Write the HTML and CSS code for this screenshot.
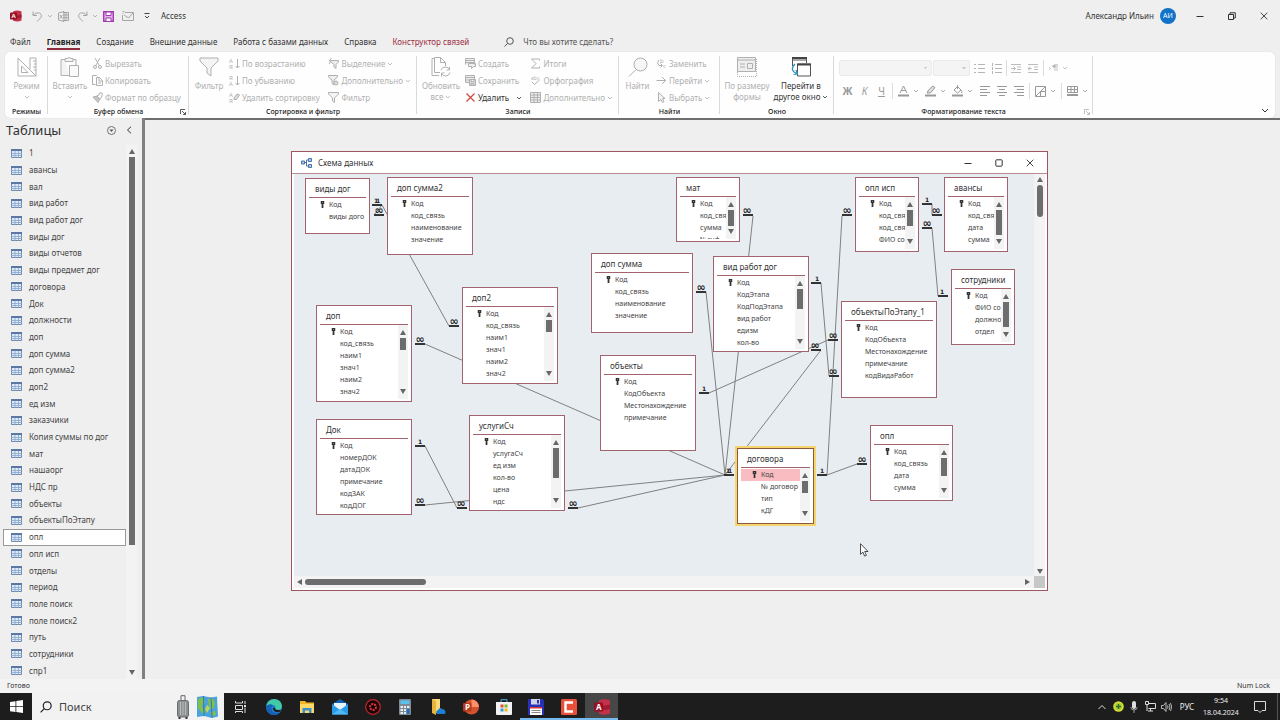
FILE: index.html
```html
<!DOCTYPE html>
<html lang="ru">
<head>
    <meta charset="UTF-8">
    <meta name="viewport" content="width=device-width, initial-scale=1.0">
    <title>Access - Схема данных</title>
    <link rel="stylesheet" href="styles.css">
</head>
<body>
    <svg class="sprite" aria-hidden="true">
        <symbol id="chev" viewBox="0 0 6 4"><path d="M1 1l2 2 2-2" fill="none" stroke="currentColor" stroke-width=".8"/></symbol>
        <symbol id="up" viewBox="0 0 6 5"><path d="M3 0l3 5H0z" fill="currentColor"/></symbol>
        <symbol id="down" viewBox="0 0 6 5"><path d="M0 0h6L3 5z" fill="currentColor"/></symbol>
        <symbol id="left" viewBox="0 0 5 6"><path d="M5 0v6L0 3z" fill="currentColor"/></symbol>
        <symbol id="right" viewBox="0 0 5 6"><path d="M0 0l5 3-5 3z" fill="currentColor"/></symbol>
        <symbol id="key" viewBox="0 0 5 8"><path d="M0.500 0h4v3.500h-1V8h-2V3.500h-1z" fill="#333"/><path d="M2 1h1v1H2zM3 5h1v1H3z" fill="#999"/></symbol>
        <symbol id="table" viewBox="0 0 11 9"><path d="M.5.5h10v8H.5z" fill="#dce9f7" stroke="#7088ac"/><path d="M0 0h11v2H0z" fill="#5b78a5"/><path d="M0 4.500h11M0 6.500h11M4 2v7M7.500 2v7" stroke="#88a4cc" stroke-width=".8"/></symbol>
        <symbol id="glass" viewBox="0 0 10 10"><circle cx="6" cy="4" r="3.300" fill="none" stroke="currentColor"/><path d="M3.600 6.400L.5 9.500" stroke="currentColor"/></symbol>
        <symbol id="launch" viewBox="0 0 6 6"><path d="M.5 5V.5H5M2 2l3.500 3.500M5.500 3v2.500H3" fill="none" stroke="currentColor" stroke-width=".8"/></symbol>
        <symbol id="funnel" viewBox="0 0 20 20"><path d="M1 1h18v3l-7 7v8l-4-3v-5L1 4z" fill="#f4f4f4" stroke="currentColor"/></symbol>
        <symbol id="min" viewBox="0 0 8 8"><path d="M0.500 4.500h7" stroke="currentColor"/></symbol>
        <symbol id="close" viewBox="0 0 8 8"><path d="M.7.7l6.600 6.600M7.300.7L.7 7.300" stroke="currentColor" stroke-width=".9"/></symbol>
    </svg>

    <header class="titlebar">
        <div class="quick-access">
            <svg class="app-logo" viewBox="0 0 12 12"><path d="M3 1.500Q7-.5 11.500 1.500v9Q7 12.500 3 10.500z" fill="#c4314b"/><path d="M3 5q4 1 8.500-.5v3Q7 9 3 8z" fill="#a01c34"/><rect y="2.500" width="7" height="7" rx="1" fill="#970f25"/><text x="1.500" y="8.300" font-size="6" font-weight="700" fill="#fff">A</text></svg>
            <button class="qa-btn undo" aria-label="Отменить"><svg width="11" height="11" viewBox="0 0 11 11"><path d="M1 .5v4h4M1 4.500Q4 .8 7.500 2q4 2.500 0 6L5 10.500" fill="none" stroke="currentColor"/></svg><svg width="6" height="4"><use href="#chev"/></svg></button>
            <button class="qa-btn" aria-label="Экспорт в Excel"><svg width="11" height="11" viewBox="0 0 11 11"><path d="M5 1.500h5.500v8H5M5 4h5.500M5 6.700h5.500M8 1.500v8M.5 2L6 .5v10L.5 9zM2 4l2.500 3.500M4.500 4L2 7.500" fill="none" stroke="currentColor"/></svg></button>
            <button class="qa-btn redo" aria-label="Вернуть"><svg width="11" height="11" viewBox="0 0 11 11"><path d="M10 .5v4H6M10 4.500Q7 .8 3.500 2q-4 2.500 0 6L6 10.500" fill="none" stroke="currentColor"/></svg><svg width="6" height="4"><use href="#chev"/></svg></button>
            <button class="qa-btn" aria-label="Сохранить"><svg width="11" height="11" viewBox="0 0 11 11"><path d="M.7.7h9.600v9.600H.7z" fill="#e3b4e8" stroke="#a03cb0" stroke-width="1.400"/><path d="M3 1h5v3.500H3zM3 10V7h5v3" fill="#fff" stroke="#a03cb0"/></svg></button>
            <button class="qa-btn" aria-label="Отправить по почте"><svg width="12" height="10" viewBox="0 0 12 10"><path d="M3 1.500h8.500v8h-11V4M2 4l4.500 3L11 2M.5.5h2M.5 2.500h1" fill="none" stroke="currentColor"/></svg></button>
            <button class="qa-btn more" aria-label="Настройка панели"><svg width="6" height="6" viewBox="0 0 6 6"><path d="M.5.5h5M1 3l2 2 2-2" fill="none" stroke="currentColor"/></svg></button>
            <span class="app-name">Access</span>
        </div>
        <div class="account">
            <span>Александр Ильин</span>
            <span class="avatar">АИ</span>
            <button class="win-btn" aria-label="Свернуть"><svg width="8" height="8"><use href="#min"/></svg></button>
            <button class="win-btn" aria-label="Восстановить"><svg width="8" height="8" viewBox="0 0 8 8"><path d="M.5 2.500h5v5h-5zM2 2.500V.8h5.300V6H5.500" fill="none" stroke="currentColor"/></svg></button>
            <button class="win-btn" aria-label="Закрыть"><svg width="8" height="8"><use href="#close"/></svg></button>
        </div>
    </header>

    <nav class="tabs">
        <a class="tab" href="#">Файл</a>
        <a class="tab active" href="#">Главная</a>
        <a class="tab" href="#">Создание</a>
        <a class="tab" href="#">Внешние данные</a>
        <a class="tab" href="#">Работа с базами данных</a>
        <a class="tab" href="#">Справка</a>
        <a class="tab context" href="#">Конструктор связей</a>
        <label class="tell-me"><svg width="10" height="10"><use href="#glass"/></svg><input type="text" placeholder="Что вы хотите сделать?" aria-label="Что вы хотите сделать?"></label>
    </nav>

    <div class="ribbon">
        <section class="group group-views">
            <div class="group-body">
                <button class="big"><svg width="20" height="20" viewBox="0 0 20 20"><path d="M1 1v18h18zM4.500 9v6.500H11zM13 1h6v18M13 1v11M16 4h3M17 7h2M16 10h3M17 13h2" fill="none" stroke="currentColor"/></svg><span>Режим</span><svg width="6" height="4"><use href="#chev"/></svg></button>
            </div>
            <h2>Режимы</h2>
        </section>
        <section class="group group-clipboard">
            <div class="group-body">
                <button class="big"><svg width="20" height="20" viewBox="0 0 20 20"><path d="M5 2.500H1v16h8M13 2.500h3V8M5 1.500h2q2-2 4 0h2v3H5z" fill="#f4f4f4" stroke="currentColor"/><path d="M9.500 8.500h9v11h-9z" fill="#fafafa" stroke="currentColor"/></svg><span>Вставить</span><svg width="6" height="4"><use href="#chev"/></svg></button>
                <div class="rows">
                    <button class="small"><svg width="11" height="11" viewBox="0 0 11 11"><path d="M3 0l4.500 8M8 0L3.500 8" stroke="currentColor"/><circle cx="3" cy="9" r="1.500" fill="none" stroke="currentColor"/><circle cx="8" cy="9" r="1.500" fill="none" stroke="currentColor"/></svg>Вырезать</button>
                    <button class="small"><svg width="11" height="11" viewBox="0 0 11 11"><path d="M3.500 9.500h-3v-9h4l1 1M4.500 2.500h3l3 3v5h-6zM7 2.500V6h3.500M6 8h3" fill="none" stroke="currentColor"/></svg>Копировать</button>
                    <button class="small"><svg width="11" height="11" viewBox="0 0 11 11"><path d="M1 5l4-1 3 3-2 3.500z" fill="#c4c4c4" stroke="currentColor"/><path d="M5 4l2-1 1-2.500 2.500 1L9.500 5 8 7z" fill="none" stroke="currentColor"/></svg>Формат по образцу</button>
                </div>
            </div>
            <h2>Буфер обмена</h2>
            <button class="launcher dark" aria-label="Буфер обмена: параметры"><svg width="6" height="6"><use href="#launch"/></svg></button>
        </section>
        <section class="group group-sort">
            <div class="group-body">
                <button class="big"><svg width="20" height="20"><use href="#funnel"/></svg><span>Фильтр</span></button>
                <div class="rows">
                    <button class="small"><svg width="11" height="12" viewBox="0 0 11 12"><text x="0" y="5" font-size="6" fill="currentColor">А</text><text x="0" y="11" font-size="6" fill="currentColor">Я</text><path d="M8.500 1v9M6.500 8l2 2 2-2" fill="none" stroke="currentColor"/></svg>По возрастанию</button>
                    <button class="small"><svg width="11" height="12" viewBox="0 0 11 12"><text x="0" y="5" font-size="6" fill="currentColor">Я</text><text x="0" y="11" font-size="6" fill="currentColor">А</text><path d="M8.500 1v9M6.500 8l2 2 2-2" fill="none" stroke="currentColor"/></svg>По убыванию</button>
                    <button class="small"><svg width="11" height="12" viewBox="0 0 11 12"><text x="0" y="5" font-size="6" fill="currentColor">А</text><text x="0" y="11" font-size="6" fill="currentColor">Я</text><path d="M5 6l3-4 2.500 1-3 4.500H5z" fill="#ddd" stroke="currentColor"/></svg>Удалить сортировку</button>
                </div>
                <div class="rows">
                    <button class="small"><svg width="11" height="11" viewBox="0 0 11 11"><path d="M2.500 2.500h8v1.500L8 6.500v4L6 9V6.500L3 4" fill="#eee" stroke="currentColor"/><path d="M3.500 0L1 3h2L1 6" fill="none" stroke="currentColor"/></svg>Выделение<svg width="6" height="4"><use href="#chev"/></svg></button>
                    <button class="small"><svg width="11" height="11" viewBox="0 0 11 11"><path d="M.5.5h9V2L6 5v5L4 8.500V5L.5 2z" fill="#eee" stroke="currentColor"/><circle cx="8" cy="8" r="2" fill="#ddd" stroke="currentColor"/></svg>Дополнительно<svg width="6" height="4"><use href="#chev"/></svg></button>
                    <button class="small"><svg width="11" height="11" viewBox="0 0 11 11"><path d="M.5.5h10V2L6.500 6v4.500L4.500 9V6L.5 2z" fill="#f4f4f4" stroke="currentColor"/></svg>Фильтр</button>
                </div>
            </div>
            <h2>Сортировка и фильтр</h2>
        </section>
        <section class="group group-records">
            <div class="group-body">
                <button class="big"><svg width="20" height="20" viewBox="0 0 20 20"><path d="M8 18.500H1v-17h3M3.500.5h6l5 5V9M9.500.5v5h5M3.500.5v15H9" fill="none" stroke="currentColor"/><path d="M10 13q1-3 4.500-3 3 0 4 2.500M18.500 10v3h-3M19 15.500q-1 3.500-4.500 3.500-3 0-4-2.500M10.500 19.500V16h3" fill="none" stroke="currentColor"/></svg><span>Обновить</span><span class="with-chev">все<svg width="6" height="4"><use href="#chev"/></svg></span></button>
                <div class="rows">
                    <button class="small"><svg width="11" height="11" viewBox="0 0 11 11"><path d="M.5 6.500v-6h9v6M.5 2.500h9M.5 4.500h9M3.500 5.500h7v3h-2l-2 2v-2h-3z" fill="#eee" stroke="currentColor"/></svg>Создать</button>
                    <button class="small"><svg width="11" height="11" viewBox="0 0 11 11"><path d="M4 7.500H.5v-7h9V4M.5 2.500h9M.5 5H5" fill="#eee" stroke="currentColor"/><path d="M4.500 4.500h6v6h-6zM6 4.500v2h3v-2M6 10.500v-2h3v2" fill="#ddd" stroke="currentColor"/></svg>Сохранить</button>
                    <button class="small enabled"><svg width="11" height="11" viewBox="0 0 11 11"><path d="M1.500 1.500l8 8M9.500 1.500l-8 8" stroke="#d0473f" stroke-width="1.200"/></svg>Удалить<svg class="split" width="6" height="4"><use href="#chev"/></svg></button>
                </div>
                <div class="rows">
                    <button class="small"><svg width="11" height="11" viewBox="0 0 11 11"><path d="M9.500 2.500V1h-8L6 5.500 1.500 10h8V8.500" fill="none" stroke="currentColor"/></svg>Итоги</button>
                    <button class="small"><svg width="11" height="11" viewBox="0 0 11 11"><text x="1" y="4.500" font-size="5" fill="currentColor">abc</text><path d="M2 7l2.500 2.500L9.500 5" fill="none" stroke="currentColor"/></svg>Орфография</button>
                    <button class="small"><svg width="11" height="11" viewBox="0 0 11 11"><path d="M.5.5h10v10H.5zM0 3h11M0 5.500h11M0 8h11M4 1v9M7.500 1v9" fill="#eee" stroke="currentColor"/></svg>Дополнительно<svg width="6" height="4"><use href="#chev"/></svg></button>
                </div>
            </div>
            <h2>Записи</h2>
        </section>
        <section class="group group-find">
            <div class="group-body">
                <button class="big"><svg width="20" height="20" viewBox="0 0 20 20"><circle cx="12.500" cy="7.500" r="6.500" fill="#f6f6f6" stroke="currentColor"/><path d="M8 12.500L1 19.500" stroke="currentColor"/></svg><span>Найти</span></button>
                <div class="rows">
                    <button class="small"><svg class="replace-icon" width="11" height="11" viewBox="0 0 11 11"><text x="4" y="5" font-size="6" fill="currentColor">b</text><text x="7" y="10" font-size="6" fill="currentColor">c</text><path d="M3 2q-3 3 0 5.500h3M4.500 5.500l2 2-2 2" fill="none" stroke="currentColor"/></svg>Заменить</button>
                    <button class="small"><svg width="11" height="11" viewBox="0 0 11 11"><path d="M.5 5.500h9M6 2l3.500 3.500L6 9" fill="none" stroke="currentColor"/></svg>Перейти<svg width="6" height="4"><use href="#chev"/></svg></button>
                    <button class="small"><svg width="11" height="11" viewBox="0 0 11 11"><path d="M2.500.5v9L5 7.500l1.500 3 1.500-1-1.500-3H9z" fill="#f4f4f4" stroke="currentColor"/></svg>Выбрать<svg width="6" height="4"><use href="#chev"/></svg></button>
                </div>
            </div>
            <h2>Найти</h2>
        </section>
        <section class="group group-window">
            <div class="group-body">
                <button class="big"><svg width="20" height="20" viewBox="0 0 20 20"><path d="M.5.5h18v14H.5zM.5 3h18" fill="#eee" stroke="currentColor"/><path d="M3 7h5M3 10h5M10.500 6.500h5v5h-5z" fill="none" stroke="currentColor"/><path d="M.5 15v4.500h19V1" fill="none" stroke="currentColor" stroke-dasharray="1 1"/></svg><span>По размеру</span><span>формы</span></button>
                <button class="big enabled"><svg width="20" height="20" viewBox="0 0 20 20"><path d="M1.500 9V1h14v5M1.500 3h14M6.500 7h13v12h-13z" fill="none" stroke="#555"/><path d="M1 1h15M6 7.500h14" stroke="#444" stroke-width="2"/><path d="M4 7q-6 6 1.500 9.500M2.500 17.500l4-.5-1.500-4" fill="none" stroke="#2b95b8" stroke-width="1.200"/></svg><span>Перейти в</span><span class="with-chev">другое окно<svg width="6" height="4"><use href="#chev"/></svg></span></button>
            </div>
            <h2>Окно</h2>
        </section>
        <section class="group group-format">
            <div class="format-row">
                <select class="font-name" aria-label="Шрифт" disabled><option></option></select>
                <select class="font-size" aria-label="Размер шрифта" disabled><option></option></select>
                <button class="fmt" aria-label="Маркеры"><svg width="11" height="11" viewBox="0 0 11 11"><path d="M4 1.500h7M4 5.500h7M4 9.500h7M0 1.500h2M0 5.500h2M0 9.500h2" stroke="currentColor"/></svg></button>
                <button class="fmt" aria-label="Нумерация"><svg width="11" height="11" viewBox="0 0 11 11"><path d="M4 1.500h7M4 5.500h7M4 9.500h7M1.500 0v3M1.500 4v3M1.500 8v3" stroke="currentColor"/></svg></button>
                <i class="bar"></i>
                <button class="fmt" aria-label="Увеличить отступ"><svg width="11" height="9" viewBox="0 0 11 9"><path d="M0 .5h10M6 3h4M6 5.500h4M0 8.500h10M0 4.500h4M2.500 2.500l2 2-2 2" fill="none" stroke="currentColor" stroke-width=".9"/></svg></button>
                <button class="fmt" aria-label="Уменьшить отступ"><svg width="11" height="9" viewBox="0 0 11 9"><path d="M0 .5h10M6 3h4M6 5.500h4M0 8.500h10M0 4.500h4M2 2.500l-2 2 2 2" fill="none" stroke="currentColor" stroke-width=".9"/></svg></button>
                <i class="bar"></i>
                <button class="fmt with-arrow" aria-label="Направление текста"><svg width="9" height="8" viewBox="0 0 9 8"><path d="M0 3l1.500 1.500L0 6M6 1v6M8 1v6M9 .8H5" fill="none" stroke="currentColor" stroke-width=".8"/><circle cx="5" cy="2.300" r="1.500" fill="currentColor"/></svg><svg width="6" height="4"><use href="#chev"/></svg></button>
            </div>
            <div class="format-row second">
                <button class="fmt bold">Ж</button>
                <button class="fmt italic">К</button>
                <button class="fmt underline">Ч</button>
                <i class="bar"></i>
                <button class="fmt with-arrow" aria-label="Цвет текста"><svg width="11" height="12" viewBox="0 0 11 12"><path d="M2 8l3.500-7L9 8M3.200 5.500h4.600" fill="none" stroke="currentColor"/><path d="M0 10.500h11" stroke="currentColor" stroke-width="2"/></svg><svg width="6" height="4"><use href="#chev"/></svg></button>
                <button class="fmt with-arrow" aria-label="Выделение цветом"><svg width="11" height="12" viewBox="0 0 11 12"><path d="M2 8l1.500-3L8 1l2 1.500-4 5-2 .5z" fill="#ddd" stroke="currentColor"/><path d="M0 10.500h11" stroke="currentColor" stroke-width="2"/></svg><svg width="6" height="4"><use href="#chev"/></svg></button>
                <button class="fmt with-arrow" aria-label="Цвет фона"><svg width="11" height="12" viewBox="0 0 11 12"><path d="M2 5l3.500-3.500L9 5 5.500 8zM5.500 0v4M9 5q1.500 1.500.5 3" fill="none" stroke="currentColor"/><path d="M0 10.500h11" stroke="currentColor" stroke-width="2"/></svg><svg width="6" height="4"><use href="#chev"/></svg></button>
                <button class="fmt" aria-label="По левому краю"><svg width="10" height="11" viewBox="0 0 10 11"><path d="M0 .5h10M0 3.500h7M0 6.500h10M0 9.500h7" stroke="currentColor"/></svg></button>
                <button class="fmt" aria-label="По центру"><svg width="10" height="11" viewBox="0 0 10 11"><path d="M0 .5h10M2 3.500h6M0 6.500h10M2 9.500h6" stroke="currentColor"/></svg></button>
                <button class="fmt" aria-label="По правому краю"><svg width="10" height="11" viewBox="0 0 10 11"><path d="M0 .5h10M3 3.500h7M0 6.500h10M3 9.500h7" stroke="currentColor"/></svg></button>
                <i class="bar"></i>
                <button class="fmt with-arrow" aria-label="Границы"><svg width="11" height="11" viewBox="0 0 11 11"><path d="M.5.5h10v10H.5zM1 10l9-9M5.500 5.500v5M5.500 5.500h5" fill="none" stroke="currentColor"/></svg><svg width="6" height="4"><use href="#chev"/></svg></button>
                <i class="bar"></i>
                <button class="fmt with-arrow" aria-label="Сетка"><svg width="11" height="10" viewBox="0 0 11 10"><path d="M.5.5h10v6H.5zM0 3.500h11M4 .5v6M7.500.5v6" fill="none" stroke="currentColor"/><path d="M0 9h11" stroke="currentColor" stroke-width="2"/></svg><svg width="6" height="4"><use href="#chev"/></svg></button>
            </div>
            <h2>Форматирование текста</h2>
            <button class="launcher" aria-label="Форматирование: параметры"><svg width="6" height="6"><use href="#launch"/></svg></button>
        </section>
        <button class="collapse" aria-label="Свернуть ленту"><svg width="8" height="5" viewBox="0 0 8 5"><path d="M1 1l3 3 3-3" fill="none" stroke="currentColor"/></svg></button>
    </div>

    <main class="main">
        <aside class="sidebar">
            <div class="sidebar-head">
                <h1>Таблицы</h1>
                <button aria-label="Категория"><svg width="9" height="9" viewBox="0 0 9 9"><circle cx="4.500" cy="4.500" r="4" fill="none" stroke="#555" stroke-width=".8"/><path d="M2.500 3.500h4l-2 2.500z" fill="#555"/></svg></button>
                <button aria-label="Скрыть область"><svg width="6" height="8" viewBox="0 0 6 8"><path d="M5 .7L1.500 4 5 7.300" fill="none" stroke="#333"/></svg></button>
            </div>
            <div class="sidebar-body">
                <ul class="table-list">
                    <li><svg><use href="#table"/></svg>1</li>
                    <li><svg><use href="#table"/></svg>авансы</li>
                    <li><svg><use href="#table"/></svg>вал</li>
                    <li><svg><use href="#table"/></svg>вид работ</li>
                    <li><svg><use href="#table"/></svg>вид работ дог</li>
                    <li><svg><use href="#table"/></svg>виды дог</li>
                    <li><svg><use href="#table"/></svg>виды отчетов</li>
                    <li><svg><use href="#table"/></svg>виды предмет дог</li>
                    <li><svg><use href="#table"/></svg>договора</li>
                    <li><svg><use href="#table"/></svg>Док</li>
                    <li><svg><use href="#table"/></svg>должности</li>
                    <li><svg><use href="#table"/></svg>доп</li>
                    <li><svg><use href="#table"/></svg>доп сумма</li>
                    <li><svg><use href="#table"/></svg>доп сумма2</li>
                    <li><svg><use href="#table"/></svg>доп2</li>
                    <li><svg><use href="#table"/></svg>ед изм</li>
                    <li><svg><use href="#table"/></svg>заказчики</li>
                    <li><svg><use href="#table"/></svg>Копия суммы по дог</li>
                    <li><svg><use href="#table"/></svg>мат</li>
                    <li><svg><use href="#table"/></svg>нашаорг</li>
                    <li><svg><use href="#table"/></svg>НДС пр</li>
                    <li><svg><use href="#table"/></svg>объекты</li>
                    <li><svg><use href="#table"/></svg>объектыПоЭтапу</li>
                    <li class="selected"><svg><use href="#table"/></svg>опл</li>
                    <li><svg><use href="#table"/></svg>опл исп</li>
                    <li><svg><use href="#table"/></svg>отделы</li>
                    <li><svg><use href="#table"/></svg>период</li>
                    <li><svg><use href="#table"/></svg>поле поиск</li>
                    <li><svg><use href="#table"/></svg>поле поиск2</li>
                    <li><svg><use href="#table"/></svg>путь</li>
                    <li><svg><use href="#table"/></svg>сотрудники</li>
                    <li><svg><use href="#table"/></svg>спр1</li>
                </ul>
                <div class="scroll"><svg><use href="#up"/></svg><i class="thumb"></i><svg><use href="#down"/></svg></div>
            </div>
        </aside>

        <div class="workspace">
            <section class="mdi">
                <div class="mdi-title">
                    <svg width="11" height="10" viewBox="0 0 11 10"><path d="M.5 3h3v3h-3zM7.500.5h3v3h-3zM7.500 6.500h3v3h-3z" fill="#a9c6ea" stroke="#4a74ad"/><path d="M3.500 4.500h2M5.500 2v6M5.500 2h2M5.500 8h2" fill="none" stroke="#4a74ad"/></svg>
                    <h2>Схема данных</h2>
                    <button aria-label="Свернуть окно"><svg width="8" height="8"><use href="#min"/></svg></button>
                    <button aria-label="Развернуть окно"><svg width="8" height="8" viewBox="0 0 8 8"><rect x=".8" y=".8" width="6.400" height="6.400" rx=".8" fill="none" stroke="currentColor"/></svg></button>
                    <button aria-label="Закрыть окно"><svg width="8" height="8"><use href="#close"/></svg></button>
                </div>
                <div class="mdi-body">
                    <div class="canvas">
                        <!-- relationship lines, drawn under the tables -->
                        <svg class="relations" viewBox="294 174 741 402">
                            <g class="lines">
                                <path d="M382 205L449 326M382 205l-8 10M425 344L725 475M425 446l32 62M425 505L725 475M578 508l147-33M753 216L725 475M706 292l19 183M821 350L725 475"/>
                                <path d="M821 283l8 93M709 393l119-53M827 475L842 216M827 475l30-11M932 204v11M932 228l6 68"/>
                            </g>
                            <path class="ends" d="M372 205h10M374 215h10M449 326h10M415 344h10M415 446h10M457 508h10M415 505h10M568 508h10M743 215h10M696 292h10M811 283h10M829 376h10M811 350h10M699 393h10M828 340h10M724 475h10M817 475h10M842 215h10M857 464h10M922 204h10M932 215h10M922 228h10M938 296h10"/>
                            <g class="marks">
                                <text x="376" y="203">1</text><text x="378" y="203">1</text><text x="420" y="444">1</text><text x="728" y="473">1</text><text x="730" y="473">1</text><text x="822" y="473">1</text>
                                <text x="817" y="281">1</text><text x="704" y="391">1</text><text x="927" y="202">1</text><text x="942" y="294">1</text>
                            </g>
                            <g class="marks many">
                                <text x="379" y="214">∞</text><text x="454" y="325">∞</text><text x="420" y="343">∞</text><text x="461" y="507">∞</text><text x="420" y="504">∞</text><text x="573" y="507">∞</text><text x="747" y="214">∞</text>
                                <text x="701" y="291">∞</text><text x="833" y="375">∞</text><text x="815" y="349">∞</text><text x="833" y="339">∞</text><text x="847" y="214">∞</text><text x="862" y="463">∞</text><text x="936" y="214">∞</text><text x="927" y="227">∞</text>
                            </g>
                        </svg>

                        <article class="node vidy-dog">
                            <h3>виды дог</h3>
                            <ul><li><svg><use href="#key"/></svg>Код</li><li>виды дого</li></ul>
                        </article>
                        <article class="node dop-summa2">
                            <h3>доп сумма2</h3>
                            <ul><li><svg><use href="#key"/></svg>Код</li><li>код_связь</li><li>наименование</li><li>значение</li></ul>
                        </article>
                        <article class="node dop">
                            <h3>доп</h3>
                            <ul><li><svg><use href="#key"/></svg>Код</li><li>код_связь</li><li>наим1</li><li>знач1</li><li>наим2</li><li>знач2</li></ul>
                            <div class="scroll"><svg><use href="#up"/></svg><i class="thumb"></i><svg><use href="#down"/></svg></div>
                        </article>
                        <article class="node dop2">
                            <h3>доп2</h3>
                            <ul><li><svg><use href="#key"/></svg>Код</li><li>код_связь</li><li>наим1</li><li>знач1</li><li>наим2</li><li>знач2</li></ul>
                            <div class="scroll"><svg><use href="#up"/></svg><i class="thumb"></i><svg><use href="#down"/></svg></div>
                        </article>
                        <article class="node dok">
                            <h3>Док</h3>
                            <ul><li><svg><use href="#key"/></svg>Код</li><li>номерДОК</li><li>датаДОК</li><li>примечание</li><li>кодЗАК</li><li>кодДОГ</li></ul>
                        </article>
                        <article class="node uslugi">
                            <h3>услугиСч</h3>
                            <ul><li><svg><use href="#key"/></svg>Код</li><li>услугаСч</li><li>ед изм</li><li>кол-во</li><li>цена</li><li>ндс</li></ul>
                            <div class="scroll"><svg><use href="#up"/></svg><i class="thumb"></i><svg><use href="#down"/></svg></div>
                        </article>
                        <article class="node mat">
                            <h3>мат</h3>
                            <ul><li><svg><use href="#key"/></svg>Код</li><li>код_свя</li><li>сумма</li><li>№счф</li></ul>
                            <div class="scroll"><svg><use href="#up"/></svg><i class="thumb"></i><svg><use href="#down"/></svg></div>
                        </article>
                        <article class="node dop-summa">
                            <h3>доп сумма</h3>
                            <ul><li><svg><use href="#key"/></svg>Код</li><li>код_связь</li><li>наименование</li><li>значение</li></ul>
                        </article>
                        <article class="node vid-rabot">
                            <h3>вид работ дог</h3>
                            <ul><li><svg><use href="#key"/></svg>Код</li><li>КодЭтапа</li><li>КодПодЭтапа</li><li>вид работ</li><li>едизм</li><li>кол-во</li></ul>
                            <div class="scroll"><svg><use href="#up"/></svg><i class="thumb"></i><svg><use href="#down"/></svg></div>
                        </article>
                        <article class="node obekty">
                            <h3>объекты</h3>
                            <ul><li><svg><use href="#key"/></svg>Код</li><li>КодОбъекта</li><li>Местонахождение</li><li>примечание</li></ul>
                        </article>
                        <article class="node dogovora">
                            <h3>договора</h3>
                            <ul><li class="picked"><svg><use href="#key"/></svg>Код</li><li>№ договор</li><li>тип</li><li>кДГ</li></ul>
                            <div class="scroll"><svg><use href="#up"/></svg><i class="thumb"></i><svg><use href="#down"/></svg></div>
                        </article>
                        <article class="node opl-isp">
                            <h3>опл исп</h3>
                            <ul><li><svg><use href="#key"/></svg>Код</li><li>код_свя</li><li>код_свя</li><li>ФИО со</li></ul>
                            <div class="scroll"><svg><use href="#up"/></svg><i class="thumb"></i><svg><use href="#down"/></svg></div>
                        </article>
                        <article class="node avansy">
                            <h3>авансы</h3>
                            <ul><li><svg><use href="#key"/></svg>Код</li><li>код_свя</li><li>дата</li><li>сумма</li></ul>
                            <div class="scroll"><svg><use href="#up"/></svg><i class="thumb"></i><svg><use href="#down"/></svg></div>
                        </article>
                        <article class="node sotrudniki">
                            <h3>сотрудники</h3>
                            <ul><li><svg><use href="#key"/></svg>Код</li><li>ФИО со</li><li>должно</li><li>отдел</li></ul>
                            <div class="scroll"><svg><use href="#up"/></svg><i class="thumb"></i><svg><use href="#down"/></svg></div>
                        </article>
                        <article class="node obekty-etap">
                            <h3>объектыПоЭтапу_1</h3>
                            <ul><li><svg><use href="#key"/></svg>Код</li><li>КодОбъекта</li><li>Местонахождение</li><li>примечание</li><li>кодВидаРабот</li></ul>
                        </article>
                        <article class="node opl">
                            <h3>опл</h3>
                            <ul><li><svg><use href="#key"/></svg>Код</li><li>код_связь</li><li>дата</li><li>сумма</li></ul>
                            <div class="scroll"><svg><use href="#up"/></svg><i class="thumb"></i><svg><use href="#down"/></svg></div>
                        </article>

                        <svg class="cursor" viewBox="0 0 9 14"><path d="M.5.7v10.600l2.400-2.200 1.700 4 1.800-.8-1.700-3.800H8z" fill="#fff" stroke="#222" stroke-width=".8"/></svg>
                    </div>
                    <div class="scroll canvas-v"><svg><use href="#up"/></svg><i class="thumb"></i><svg><use href="#down"/></svg></div>
                    <div class="canvas-h"><svg><use href="#left"/></svg><i class="thumb"></i><svg><use href="#right"/></svg></div>
                    <i class="corner"></i>
                </div>
            </section>
        </div>
    </main>

    <footer class="status"><span>Готово</span><span>Num Lock</span></footer>

    <div class="taskbar">
        <button class="start" aria-label="Пуск"><svg width="13" height="13" viewBox="0 0 13 13"><path d="M0 2l5.500-.8v5H0zM6.300 1L13 0v6.200H6.300zM0 7h5.500v5L0 11.200zM6.300 7H13v6l-6.700-.9z" fill="#fff"/></svg></button>
        <label class="task-search">
            <svg width="12" height="12" viewBox="0 0 10 10"><use href="#glass"/></svg>
            <input type="text" placeholder="Поиск" aria-label="Поиск">
            <svg width="12" height="24" viewBox="0 0 12 24"><path d="M4 6V.7h4V6" fill="none" stroke="#666"/><rect x=".5" y="5.500" width="11" height="16.500" rx="2" fill="#8d9092" stroke="#6b6d6f"/><path d="M3.500 7v13M6 7v13M8.500 7v13" stroke="#b8babc"/><path d="M1.500 23h2M8.500 23h2" stroke="#333" stroke-width="2"/></svg>
            <svg width="22" height="22" viewBox="0 0 22 22"><path d="M1 1l6-1 8 1.500 6-1 1 20-6 1.500-8-2-7 1z" fill="#4aa3dc"/><path d="M2 3l5-2 2 5-3 4 3 5-2 3-5-6zM12 3l4-1 3 4-1 6-3 2-2-4zM14 16l5-1 1 4-4 1z" fill="#7fbf4d"/><path d="M7.500 0l.5 20M15 1.500l1 20" stroke="#2f75b5"/><path d="M11 9l3 3-3 5-2-4z" fill="#b9d65a"/></svg>
        </label>
        <button class="task-view" aria-label="Представление задач"><svg width="12" height="12" viewBox="0 0 12 12"><path d="M.5 0v2h7V0M.5 4.500h7v4h-7zM.5 12v-1.500h7V12M10 0v3M10 6.500V12" fill="none" stroke="#ddd"/><path d="M9 4h2v2H9z" fill="#ddd"/></svg></button>
        <div class="task-apps">
            <button aria-label="Edge"><svg viewBox="0 0 16 16"><circle cx="8" cy="8" r="8" fill="#1b7fd0"/><path d="M.2 7Q2 0 8.500 0 15 .5 16 7q0 4-4.500 4-3 0-2.500-2 1-2-1.500-3Q3 5 .2 7z" fill="#43c9a3"/><path d="M.2 7Q4 4 6.500 6 4 10 7 13q3 2 6.500 1Q9 17.500 4 15-.5 12 .2 7z" fill="#1660b5"/><path d="M9 8.500Q9 11 12 11h3q-1 2.500-4 2.200Q7 12.500 7 9z" fill="#1d1d1d"/></svg></button>
            <button aria-label="Проводник"><svg viewBox="0 0 16 16"><path d="M1 2h5l1.500 1.500H15V14H1z" fill="#f0b429"/><path d="M1 5h14v9H1z" fill="#fbd968"/><path d="M3.500 14V9h9v5h-2.500v-2.500H6V14z" fill="#3a8fd0"/></svg></button>
            <button aria-label="Почта"><svg viewBox="0 0 16 16"><path d="M0 5l8-5 8 5v10H0z" fill="#0f62ab"/><path d="M2 4h12v8H2z" fill="#e9f3fb"/><path d="M0 5l8 6 8-6v10.500H0z" fill="#2a9be8"/><path d="M0 15.500L8 10l8 5.500z" fill="#50b9f5"/></svg></button>
            <button aria-label="Запись"><svg viewBox="0 0 16 16"><circle cx="8" cy="8" r="7.300" fill="#1a0506" stroke="#c9252b" stroke-width="1.200"/><circle cx="8" cy="8" r="3" fill="none" stroke="#e0353b" stroke-width="2" stroke-dasharray="2 1"/></svg></button>
            <button aria-label="Калькулятор"><svg viewBox="0 0 16 16"><rect x="2" width="12" height="16" rx="1" fill="#7d8a96"/><path d="M3.500 1.500h9v3.500h-9z" fill="#5cc0ee"/><path d="M3.500 7H6v2H3.500zM7 7h2v2H7zM10 7h2.500v2H10zM3.500 10H6v2H3.500zM7 10h2v2H7zM3.500 13H6v2H3.500zM7 13h2v2H7z" fill="#e8edf1"/><path d="M10 10h2.500v5H10z" fill="#1c6fb8"/></svg></button>
            <button aria-label="OneDrive"><svg viewBox="0 0 16 16"><path d="M2 0h8v14H2z" fill="#f9d978"/><path d="M2 0l4 2v14l-4-2z" fill="#e8b53c"/><path d="M7 15q-2-3 1-4 2-3.500 4-1 3 0 3.500 3 .5 2-1.500 2z" fill="#1b7fd6"/></svg></button>
            <button aria-label="PowerPoint"><svg viewBox="0 0 16 16"><circle cx="8.500" cy="8" r="7.500" fill="#d35230"/><path d="M8.500.5a7.500 7.500 0 0 1 7.500 7.500H8.500z" fill="#ff8f6b"/><rect y="4" width="8.500" height="8.500" rx="1" fill="#b7391b"/><text x="2" y="11" font-size="8" font-weight="700" fill="#fff">P</text></svg></button>
            <button aria-label="Store"><svg viewBox="0 0 16 16"><path d="M5 4V.7h6V4" fill="none" stroke="#4db3e6"/><path d="M0 3h16v12q0 1-1 1H1q-1 0-1-1z" fill="#f2f2f2"/><path d="M4.500 5.500h3v3h-3z" fill="#e8502f"/><path d="M8.500 5.500h3v3h-3z" fill="#7ab929"/><path d="M4.500 9.500h3v3h-3z" fill="#2a9fe0"/><path d="M8.500 9.500h3v3h-3z" fill="#f6b81c"/></svg></button>
            <button class="running" aria-label="Total Commander"><svg viewBox="0 0 16 16"><path d="M0 0h14.500L16 1.500V16H0z" fill="#2731b8"/><path d="M3 0h9v5.500H3z" fill="#cfd3ea"/><path d="M9 1h2v3.500H9z" fill="#2731b8"/><path d="M2 8h12v8H2z" fill="#fff"/><path d="M2 8h12v1.500H2z" fill="#d33"/><path d="M3.500 11.500h9M3.500 13.500h9" stroke="#888"/></svg></button>
            <button class="running" aria-label="Camtasia"><svg viewBox="0 0 16 16"><rect width="16" height="16" rx="1.500" fill="#e8503a"/><path d="M12 3.500H4.500v9H12" fill="none" stroke="#fff" stroke-width="2.400"/></svg></button>
            <button class="running current" aria-label="Access"><svg viewBox="0 0 16 16"><path d="M5 1.500Q10-1 16 1.500v13Q10 17 5 14.500z" fill="#c4314b"/><path d="M5 6q5 1.500 11-.5V10q-6 2-11 .5z" fill="#a01c34"/><rect y="3.500" width="9" height="9" rx="1" fill="#970f25"/><text x="2" y="11" font-size="8" font-weight="700" fill="#fff">A</text></svg></button>
        </div>
        <div class="tray">
            <button aria-label="Скрытые значки"><svg width="8" height="6" viewBox="0 0 8 6"><path d="M.5 5L4 1.500 7.500 5" fill="none" stroke="#ddd"/></svg></button>
            <button aria-label="Антивирус"><svg width="11" height="11" viewBox="0 0 11 11"><circle cx="5.500" cy="5.500" r="5.300" fill="#d7dc33"/><circle cx="5.500" cy="5.500" r="3.600" fill="#a8cf38"/><path d="M5.500 3v5M3 5.500h5" stroke="#2f6b23" stroke-width="1.400"/></svg></button>
            <button aria-label="Микрофон"><svg width="8" height="12" viewBox="0 0 8 12"><rect x="2" width="4" height="8" rx="2" fill="#ddd"/><path d="M.8 6q0 3 3.200 3t3.200-3M4 9v3" fill="none" stroke="#999"/></svg></button>
            <button aria-label="Сеть"><svg width="11" height="11" viewBox="0 0 11 11"><path d="M4 2.500h6.500v5h-7M3 10h5M5.500 7.500V10M.5.500h3v3h-3zM2 3.500V10" fill="none" stroke="#ddd"/></svg></button>
            <button aria-label="Громкость"><svg width="11" height="10" viewBox="0 0 11 10"><path d="M.5 3.500h2l2.500-3v9l-2.500-3h-2zM6.500 3.500q1 1.500 0 3M8 2q2 3 0 6M9.500 1q2.500 4 0 8" fill="none" stroke="#ddd" stroke-width=".8"/></svg></button>
            <span class="lang">РУС</span>
            <time class="clock"><span>9:54</span><span>18.04.2024</span></time>
            <button class="notify" aria-label="Уведомления"><svg width="12" height="12" viewBox="0 0 12 12"><path d="M.5.5h11v9H8L6 11.500 4 9.500H.5z" fill="none" stroke="#ddd"/></svg></button>
        </div>
    </div>
</body>
</html>
```
FILE: styles.css
```css
* {
    margin: 0;
    padding: 0;
    box-sizing: border-box;
}

body {
    display: flex;
    flex-direction: column;
    height: 100vh;
    overflow: hidden;
    background: #efefef;
    color: #333;
    font-family: "Noto Sans", "Open Sans", sans-serif;
    font-size: 8px;
    line-height: 12px;
}

button {
    display: flex;
    align-items: center;
    justify-content: center;
    border: none;
    background: none;
    color: inherit;
    font: inherit;
    white-space: nowrap;
}

input {
    border: none;
    background: none;
    font: inherit;
    min-width: 0;
    outline: none;
}

h1, h2, h3 {
    font-size: 8px;
    font-weight: 400;
}

ul {
    list-style: none;
}

svg {
    display: block;
    flex: none;
}

.sprite {
    position: absolute;
    width: 0;
    height: 0;
}

/* title bar */
.titlebar {
    display: flex;
    justify-content: space-between;
    align-items: center;
    height: 32px;
    padding-left: 10px;
}

.quick-access {
    display: flex;
    align-items: center;
    gap: 8px;
    color: #a5a5a5;
}

.app-logo {
    width: 12px;
    height: 12px;
    margin-right: 2px;
}

.qa-btn {
    gap: 4px;
}

.qa-btn.more {
    margin: 0 3px 0 2px;
    color: #444;
}

.undo,
.redo {
    margin-right: -3px;
}

.app-name {
    color: #333;
}

.account {
    display: flex;
    align-items: center;
}

.avatar {
    width: 16px;
    height: 16px;
    margin: 0 8px 0 6px;
    border-radius: 50%;
    background: #1172c8;
    color: white;
    font-size: 7px;
    line-height: 16px;
    text-align: center;
}

.win-btn {
    width: 32px;
    height: 24px;
}

/* ribbon tabs */
.tabs {
    display: flex;
    gap: 16px;
    height: 20px;
    padding: 3px 10px 0;
}

.tab {
    height: 15px;
    line-height: 14px;
    color: #333;
    text-decoration: none;
    white-space: nowrap;
}

.tab.active {
    font-weight: 700;
    color: #222;
    border-bottom: 2px solid #8f2c3e;
}

.tab.context {
    color: #9c2b40;
}

.tell-me {
    display: flex;
    align-items: center;
    gap: 9px;
    height: 14px;
    margin-left: 19px;
    color: #555;
}

.tell-me input {
    width: 140px;
}

.tell-me input::placeholder {
    color: #555;
}

/* ribbon */
.ribbon {
    display: flex;
    height: 66px;
    margin: 0 5px;
    border-radius: 5px;
    background: #fefefe;
    box-shadow: 0 0 1px #c0c0c0;
    color: #b0b0b0;
}

.group {
    position: relative;
    display: flex;
    flex-direction: column;
    flex: none;
    padding-top: 3px;
}

.group::after {
    content: "";
    position: absolute;
    top: 4px;
    right: 0;
    bottom: 4px;
    width: 1px;
    background: #d9d9d9;
}

.group h2 {
    height: 12px;
    color: #222;
    font-size: 7px;
    font-weight: 500;
    text-align: center;
    white-space: nowrap;
}

.group-body {
    display: flex;
    height: 51px;
}

.group-views { width: 43px; }
.group-clipboard { width: 141px; }
.group-sort { width: 228px; }
.group-records { width: 202px; }
.group-find { width: 101px; }
.group-window { width: 114px; }
.group-format { width: 259px; }

.big {
    flex-direction: column;
    justify-content: flex-start;
    width: 44px;
    padding-top: 2px;
    line-height: 11px;
}

.big > svg:first-child {
    margin-bottom: 3px;
}

.big > svg:last-child {
    margin-top: 4px;
}

.group-sort .big {
    width: 40px;
}

.group-records .big {
    width: 48px;
}

.group-find .big {
    width: 37px;
}

.group-window .big {
    width: 54px;
}

.with-chev {
    display: flex;
    align-items: center;
    gap: 2px;
}

.enabled {
    color: #333;
}

.rows {
    display: grid;
    grid-template-rows: repeat(3, 17px);
    justify-items: start;
}

.rows + .rows {
    margin-left: auto;
    margin-right: 6px;
}

.small {
    gap: 2px;
}

.replace-icon {
    overflow: visible;
}

.split {
    margin-left: 5px;
}

.launcher {
    position: absolute;
    right: 3px;
    bottom: 3px;
}

.launcher.dark,
.collapse {
    color: #333;
}

.collapse {
    align-self: flex-end;
    width: 20px;
    height: 16px;
    margin-left: auto;
}

.format-row {
    display: flex;
    align-items: center;
    height: 18px;
    margin-top: 4px;
    padding-left: 5px;
}

.format-row.second {
    height: 22px;
    margin: 3px 0 4px;
}

.format-row select {
    height: 16px;
    margin-right: 1px;
    border: 1px solid #e2e2e2;
    border-radius: 2px;
    appearance: none;
    background:
        linear-gradient(45deg, transparent 50%, #bbb 50%) right 5px center / 2px 2px no-repeat,
        linear-gradient(-45deg, transparent 50%, #bbb 50%) right 3px center / 2px 2px no-repeat,
        #f0f0f0;
}

.font-name {
    width: 93px;
}

.font-size {
    width: 37px;
}

.fmt {
    width: 17px;
    height: 16px;
    color: #999;
}

.format-row:first-child .fmt {
    color: #b5b5b5;
}

.fmt.with-arrow {
    width: 27px;
    gap: 4px;
}

.fmt.bold {
    font-size: 10px;
    font-weight: 700;
}

.fmt.italic {
    font-size: 10px;
    font-style: italic;
}

.fmt.underline {
    font-size: 10px;
    text-decoration: underline;
}

.bar {
    width: 1px;
    height: 16px;
    margin: 0 1px;
    background: #dcdcdc;
}

.second .bar {
    margin: 0 2px;
}

/* main area */
.main {
    display: flex;
    flex: 1;
    min-height: 0;
}

.sidebar {
    display: flex;
    flex-direction: column;
    flex: none;
    width: 145px;
    padding-top: 1px;
    border-right: 3px solid #808080;
}

.sidebar-head {
    display: flex;
    align-items: center;
    height: 26px;
    padding: 0 10px 4px 6px;
    gap: 10px;
}

.sidebar-head h1 {
    flex: 1;
    font-size: 13px;
    line-height: 20px;
}

.sidebar-body {
    display: flex;
    flex: 1;
    min-height: 0;
}

.table-list {
    display: flex;
    flex-direction: column;
    width: 123px;
    margin-left: 3px;
}

.table-list li {
    display: flex;
    flex: 1;
    align-items: center;
    gap: 7px;
    padding-left: 7px;
    border: 1px solid transparent;
    min-height: 0;
    color: #444;
}

.table-list li.selected {
    background: white;
    border-color: #999;
}

.table-list svg {
    width: 11px;
    height: 9px;
}

/* vertical scroll bars */
.scroll {
    display: flex;
    flex-direction: column;
    align-items: center;
    flex: none;
    width: 10px;
    background: #f3f3f3;
    color: #666;
}

.scroll svg {
    width: 6px;
    height: 5px;
}

.scroll svg:last-child {
    margin-top: auto;
}

.thumb {
    display: block;
    background: #6d6d6d;
}

.scroll .thumb {
    width: 6px;
    margin-top: 3px;
}

.sidebar .scroll {
    padding: 4px 0;
    width: 11px;
}

.sidebar .thumb {
    height: 388px;
}

.workspace {
    position: relative;
    flex: 1;
    border-top: 2px solid #6e6e6e;
}

/* the relationships window */
.mdi {
    position: absolute;
    left: 146px;
    top: 31px;
    width: 757px;
    height: 440px;
    display: flex;
    flex-direction: column;
    border: 1px solid #9d5560;
    background: white;
}

.mdi-title {
    display: flex;
    align-items: center;
    height: 22px;
    padding-left: 9px;
    border-bottom: 1px solid #b98c94;
}

.mdi-title h2 {
    flex: 1;
    margin-left: 6px;
}

.mdi-title button {
    width: 31px;
    height: 20px;
}

.mdi-title button:last-child {
    margin-right: 2px;
}

.mdi-body {
    display: grid;
    flex: 1;
    grid-template-columns: 1fr 11px;
    grid-template-rows: 1fr 12px;
    padding: 0 2px 2px;
}

.canvas {
    position: relative;
    overflow: hidden;
    background: #e8edf1;
}

.canvas-v {
    width: 11px;
    padding: 3px 0 2px;
}

.canvas-v .thumb {
    height: 32px;
    border-radius: 3px;
}

.canvas-h {
    display: flex;
    align-items: center;
    padding: 0 4px 0 3px;
    background: #f3f3f3;
    color: #666;
}

.canvas-h svg {
    width: 5px;
    height: 6px;
}

.canvas-h svg:last-child {
    margin-left: auto;
}

.canvas-h .thumb {
    width: 121px;
    height: 6px;
    margin-left: 3px;
    border-radius: 3px;
}

.corner {
    background: #c6c8c8;
}

.relations {
    position: absolute;
    left: 0;
    top: 0;
    width: 741px;
    height: 402px;
}

.lines {
    fill: none;
    stroke: #808080;
    stroke-width: 1;
}

.ends {
    fill: none;
    stroke: #333;
    stroke-width: 2;
}

.marks {
    fill: #222;
    font-family: "DejaVu Sans", sans-serif;
    font-size: 6px;
    font-weight: 700;
    text-anchor: middle;
}

.many {
    font-size: 11px;
}

.node {
    position: absolute;
    display: grid;
    grid-template-columns: 1fr auto;
    grid-template-rows: 19px 1fr;
    padding: 0 3px 2px;
    border: 1px solid #a3636e;
    background: white;
    overflow: hidden;
}

.node h3 {
    grid-column: 1 / 3;
    padding-left: 6px;
    border-bottom: 1px solid #a3636e;
    line-height: 20px;
    white-space: nowrap;
}

.node ul {
    min-width: 0;
    overflow: hidden;
    padding-top: 1px;
    color: #444;
    font-size: 7px;
}

.node li {
    position: relative;
    height: 12px;
    padding-left: 20px;
    line-height: 12px;
    white-space: nowrap;
}

.node li svg {
    position: absolute;
    left: 11px;
    top: 2px;
    width: 5px;
    height: 7px;
}

.node .scroll {
    padding: 5px 0;
}

.node .picked {
    background: #f9bcc0;
}

.vidy-dog { left: 11px; top: 4px; width: 65px; height: 56px; }
.dop-summa2 { left: 93px; top: 3px; width: 86px; height: 78px; }
.dop { left: 22px; top: 131px; width: 96px; height: 97px; }
.dop2 { left: 168px; top: 113px; width: 96px; height: 97px; }
.dok { left: 22px; top: 245px; width: 96px; height: 96px; }
.uslugi { left: 175px; top: 241px; width: 96px; height: 96px; }
.mat { left: 382px; top: 3px; width: 64px; height: 65px; }
.dop-summa { left: 297px; top: 79px; width: 102px; height: 80px; }
.vid-rabot { left: 419px; top: 82px; width: 96px; height: 96px; }
.obekty { left: 306px; top: 181px; width: 96px; height: 96px; }
.dogovora { left: 443px; top: 274px; width: 77px; height: 76px; border-color: #8a5a3c; box-shadow: 0 0 0 2px #f6d56f; }
.opl-isp { left: 561px; top: 3px; width: 64px; height: 75px; }
.avansy { left: 650px; top: 3px; width: 64px; height: 75px; }
.sotrudniki { left: 657px; top: 95px; width: 64px; height: 76px; }
.obekty-etap { left: 547px; top: 127px; width: 96px; height: 97px; }
.opl { left: 576px; top: 251px; width: 83px; height: 76px; }

.dop .thumb,
.dop2 .thumb,
.dogovora .thumb { height: 12px; }
.uslugi .thumb { height: 30px; }
.mat .thumb { height: 16px; }
.vid-rabot .thumb { height: 20px; }
.opl-isp .thumb { height: 16px; }
.avansy .thumb,
.sotrudniki .thumb { height: 25px; }
.opl .thumb { height: 18px; }

.cursor {
    position: absolute;
    left: 566px;
    top: 369px;
    width: 9px;
    height: 14px;
}

/* status bar */
.status {
    display: flex;
    justify-content: space-between;
    height: 14px;
    padding: 0 10px 0 7px;
    background: #f3f3f3;
    font-size: 7px;
    line-height: 14px;
}

/* taskbar */
.taskbar {
    display: flex;
    height: 27px;
    background: #1d1d1d;
    color: #eee;
}

.start {
    width: 32px;
}

.task-search {
    display: flex;
    align-items: center;
    gap: 7px;
    width: 192px;
    padding: 0 6px 0 8px;
    background: #f2f2f2;
    color: #222;
    font-size: 11px;
}

.task-search input {
    flex: 1;
}

.task-search input::placeholder {
    color: #444;
}

.task-view {
    width: 34px;
}

.task-apps {
    display: flex;
    width: 360px;
}

.task-apps button {
    flex: 1;
    border-bottom: 2px solid transparent;
}

.task-apps svg {
    width: 16px;
    height: 16px;
    margin-top: 2px;
}

.task-apps .running {
    border-color: #76b9ed;
}

.task-apps .current {
    background: #474747;
}

.tray {
    display: flex;
    align-items: center;
    margin-left: auto;
    padding-right: 2px;
}

.tray button {
    width: 16px;
}

.lang {
    width: 26px;
    text-align: center;
}

.clock {
    display: flex;
    flex-direction: column;
    width: 42px;
    font-size: 7px;
    text-align: center;
}

.tray .notify {
    width: 36px;
    height: 27px;
    border-right: 1px solid #555;
}
```
